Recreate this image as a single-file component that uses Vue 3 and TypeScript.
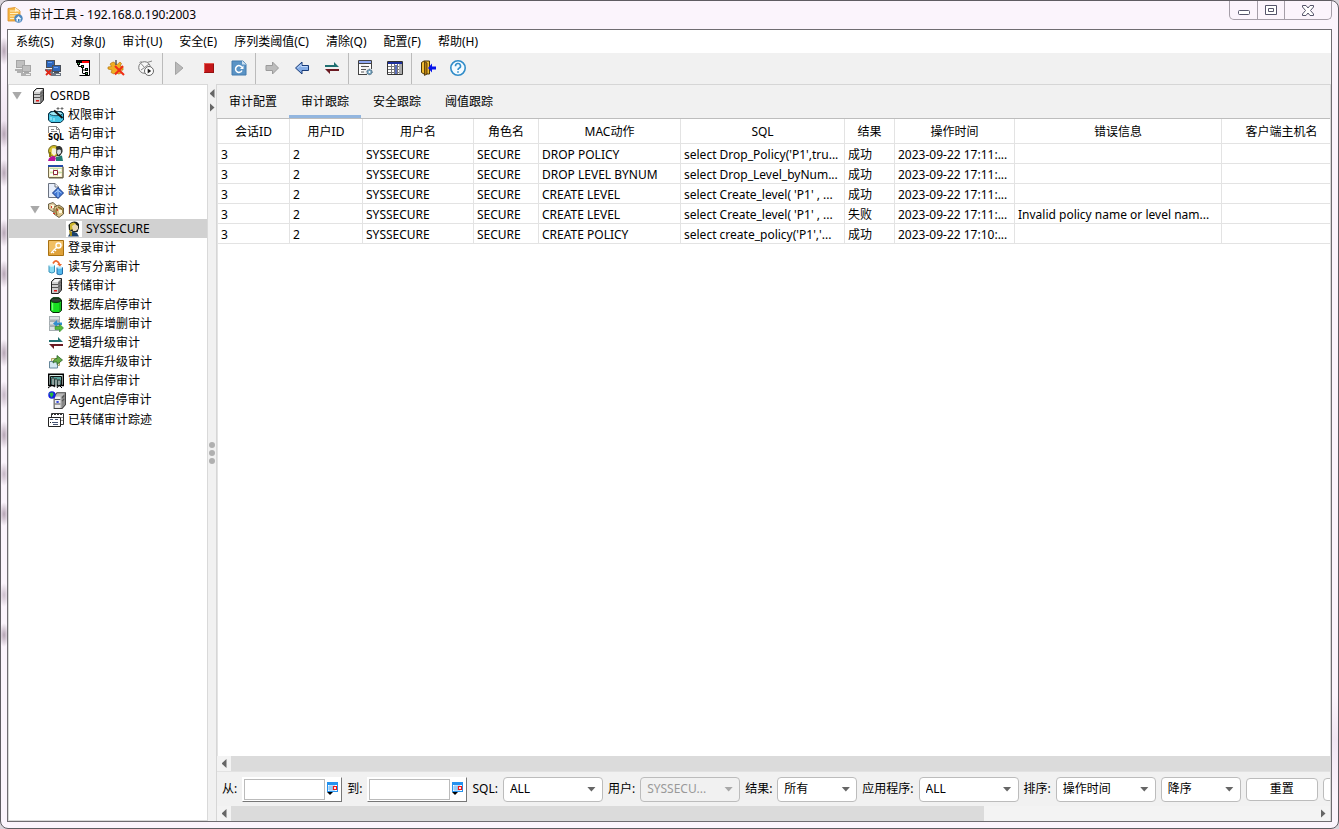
<script setup lang="ts">
import { ref } from 'vue'

interface TreeNode {
  label: string
  icon: string
  level: 0 | 1 | 2
  open?: boolean
}

interface AuditRow {
  session: string
  userId: string
  user: string
  role: string
  action: string
  sql: string
  result: string
  time: string
  error: string
  host: string
}

const server =
  '<path d="M3.500 3.500L6.500 .5H13.500V12L10.500 15.500H3.500Z" fill="#7c7c7c" stroke="#222"/><path d="M4 4h6v11H4z" fill="#cfcfcf"/><path d="M4 4L7 1H13L10 4z" fill="#f2f2f2"/><path d="M4 6.500h6M4 9.500h6M10 6.500l3-3M10 9.500l3-3" stroke="#555" fill="none"/><path d="M6 12h3v1.500H6z" fill="#e01818"/>'
const swap =
  '<path d="M1 7H15L10 2V5H1Z" fill="#1f6f70"/><path d="M15 9H1L6 14V11H15Z" fill="#6b1a22"/>'
const computers = (a: string, b: string, c: string): string =>
  `<path d="M1 0h9v8H1z" fill="${a}"/><path d="M2 1h7v6H2z" fill="${b}"/><path d="M0 9h10v2H0zM2 11h6v2H2z" fill="${c}"/><path d="M7 5h9v7H7z" fill="${a}"/><path d="M8 6h7v5H8z" fill="${b}"/><path d="M6 13h10v3H6z" fill="${c}"/><path d="M9 12h5v1H9z" fill="${a}"/><path d="M11 14h4v1h-4z" fill="#eee"/>`

const icons: Record<string, string> = {
  app:
    '<path d="M1 1.500L8 0.500L13 4V14H1Z" fill="#f5b748" stroke="#dc8c22" stroke-width="0.800"/><path d="M3 4h6M3 6.500h8M3 9h6M3 11.500h5" stroke="#fff0c4"/><path d="M8 .5V4.500H13Z" fill="#fff1cf"/><circle cx="11.500" cy="11.500" r="4.200" fill="#4d86be"/><path d="M8.500 12L11.500 9L14.500 12H13.500V14.500H9.500V12Z" fill="#e9f5ff"/><path d="M11 12h1.500v2.500H11z" fill="#397ab9"/>',
  connectOff: computers('#a6a6a6', '#c0c0c0', '#b0b0b0'),
  disconnect:
    computers('#4a4f58', '#2c66bd', '#6f7884') +
    '<path d="M3 2h4v1H3zM9 7h4v1H9z" fill="#6ba3f2"/><path d="M1 10l5 5M6 10l-5 5" stroke="#e02716" stroke-width="1.800"/>',
  tree:
    '<path d="M2.500 1.500H14.500V15.500H4.500" fill="#fff" stroke="#000"/><path d="M1 0h14v3H1z" fill="#000"/><path d="M7 1h7v2H7z" fill="#f00"/><path d="M3.500 2V6.500H8M7.500 6.500V13.500M8 10H11M8 13.500H11" stroke="#000" fill="none"/><path d="M2 2h3v3H2zM6 5h3v3H6zM10 8h3v3h-3zM10 12h3v3h-3z" fill="#000"/><path d="M3 3h1v1H3zM7 6h1v1H7zM11 9h1v1h-1zM11 13h1v1h-1z" fill="#4cd65c"/>',
  gearOff:
    '<path d="M6 2l1.500 2.200h2L12 2l1.500 1.500L12.200 6l2.800 1v3l-3 .5.5 3-2.500.5-2-2-2 2L3 12.500 4 10 0 9V7L3.500 6.500 2 4 4 2.500Z" fill="#f0ad21" stroke="#b87a13" stroke-width=".7"/><path d="M8 0V5" stroke="#555" stroke-width="1.500"/><path d="M7 6l9 9M15 6L7 14.500" stroke="#f02d16" stroke-width="2"/>',
  clock:
    '<circle cx="6.500" cy="7.500" r="5.800" fill="#f8f8f8" stroke="#777"/><path d="M3 3.500L6.500 7.500L11 4M6.500 7.500L3 10M9 2.500l5-1.500M1.500 3L3.500 1" stroke="#888" fill="none"/><circle cx="11" cy="11" r="4.500" fill="#fff" stroke="#666"/><path d="M9.700 8.500L13.200 11L9.700 13.500Z" fill="#222"/>',
  play: '<path d="M4.500 2L12 8L4.500 14.500Z" fill="#b9b9b9" stroke="#a4a4a4"/>',
  stop: '<path d="M3 3h10v10H3z" fill="#c4171a"/><path d="M3 3h10v1H3zM3 3h1v9H3z" fill="#e35a50"/><path d="M4 12h9v1H4zM12 4h1v9h-1z" fill="#941212"/>',
  refresh:
    '<path d="M1 1H12L15 4V15H1Z" fill="#5a93c5" stroke="#437bad"/><path d="M11 .5V4.500H15.500Z" fill="#cde1f1"/><path d="M11 10.500A3.400 3.400 0 1 1 11 7.500" fill="none" stroke="#fff" stroke-width="1.500"/><path d="M12.500 5.500V9H9Z" fill="#fff"/>',
  forward: '<path d="M2 5.500H8.500V2L14.500 8L8.500 14V10.500H2Z" fill="#bcbcbc" stroke="#9b9b9b"/>',
  back: '<path d="M14.500 5.500H8V2L1.500 8L8 14V10.500H14.500Z" fill="#86aee7" stroke="#173a78"/><path d="M3.500 8L7 4.500V6.500H13.500" fill="none" stroke="#c2dafb"/>',
  swap,
  form:
    '<path d="M1.500 .5H14.500V9M1.500 .5V14.500H8" fill="#fff" stroke="#444"/><path d="M2 1h12v2H2z" fill="#8fa8f2"/><path d="M1 3.500h14" stroke="#444"/><path d="M4 6.500H12M4 9.500H9M4 12H7" stroke="#555"/><path d="M1 14.500H10" stroke="#444"/><circle cx="12.500" cy="12" r="2.700" fill="#6f9db8" stroke="#3b566c" stroke-dasharray="1 1"/><circle cx="12.500" cy="12" r="1" fill="#fff"/>',
  grid:
    '<path d="M.5 1.500H15.500V14.500H.5Z" fill="#fff" stroke="#333"/><path d="M1 2h14v2H1z" fill="#1c2f9b"/><path d="M1 6.500H12M1 9.500H12M1 12.500H12M4.500 4V14M7.500 4V14M10.500 4V14" stroke="#777"/><path d="M8 5h2v9H8z" fill="#5c6fbd"/><path d="M12 4h3v10h-3z" fill="#aaa"/>',
  exit:
    '<path d="M1.500 2.500L4 1H9.500V14H4L1.500 12.500Z" fill="#f2bd32" stroke="#4b3709"/><path d="M4.500 1.500V15.500L7 14V3Z" fill="#b47b13" stroke="#332400" stroke-width=".7"/><path d="M8 8L12 3.500V6.500H16V9.500H12V12.500Z" fill="#0614eb"/>',
  help:
    '<circle cx="8" cy="8" r="7.200" fill="#f4fbff" stroke="#318dc9" stroke-width="1.600"/><path d="M5.500 6.200A2.500 2.500 0 1 1 9 8.300C8 8.800 8 9 8 10" fill="none" stroke="#318dc9" stroke-width="1.600"/><path d="M7.200 11.200h1.600v1.600H7.200z" fill="#318dc9"/>',
  server,
  permission:
    '<path d="M.5 6.500L3 4.500H13.500L15.500 6.500V13L12.500 15.500H3L.5 13Z" fill="#46c7e6" stroke="#073045"/><ellipse cx="8" cy="6.500" rx="6.500" ry="2.200" fill="#a0ecf8" stroke="#073045" stroke-width=".8"/><path d="M3 10v3M6 11v3" stroke="#baf6ff"/><path d="M6 3.500L14.500 11" stroke="#111" stroke-width="2"/><path d="M10 0v3M8.500 1.500h3M14 0v3M12.500 1.500h3" stroke="#555" stroke-width=".8"/>',
  sql:
    '<path d="M.5 7V.5H8.500L11.500 3.500V7" fill="#fff" stroke="#888"/><path d="M8.500 .5V3.500H11.500M3 3.500H6M3 5.500H9" fill="none" stroke="#888"/><text x="0" y="14" font-family="Liberation Sans Narrow, DejaVu Sans Condensed, sans-serif" font-weight="700" font-size="8" fill="#000">SQL</text>',
  users:
    '<circle cx="6" cy="6" r="5.500" fill="#d4bf2a" stroke="#554b06" stroke-width=".8"/><path d="M8 2C12-.5 15 2 14.500 7L12 11H9Z" fill="#333"/><path d="M4 3.500Q9 2 9 8L6 11L3.500 8Z" fill="#f6f2dd"/><path d="M9 4.500Q14 2.500 13.500 8L10.500 10.500L8.500 8Z" fill="#d6dde0" stroke="#111" stroke-width=".7"/><path d="M0 16Q1 11 6 11L8 13L7 16Z" fill="#b4159b"/><path d="M8 16V12L14 10.500L15 16Z" fill="#237c74"/><path d="M2 7v5" stroke="#8d7c0c" stroke-width="2"/>',
  object:
    '<path d="M.5 2.500H15V13.500H.5Z" fill="#f8efca" stroke="#746b4c"/><path d="M0 1h15v2H0z" fill="#234aa7"/><path d="M2 5h3v2H2zM10 5h3v2h-3zM2 10h3v2H2zM10 10h3v2h-3z" fill="#fff"/><path d="M2 4.500H14M2 8.500H14M5.500 4V12M9.500 4V12" stroke="#bda" fill="none"/><path d="M5.500 6.500H9.500V10.500H5.500Z" fill="#fff" stroke="#8d213a"/><path d="M1 14h14V3" fill="none" stroke="#6d644a"/>',
  missing:
    '<path d="M.5 .5H7L10.500 4V14.500H.5Z" fill="#e7eefb" stroke="#6a7280"/><path d="M7 .5V4H10.500" fill="#fff" stroke="#6a7280"/><path d="M10 4.500L15.500 10L10 15.500L4.500 10Z" fill="#3d75d4" stroke="#193a86"/><path d="M10 6V14M6.500 10L10 7.500L13.500 10" fill="none" stroke="#a9cdf9"/>',
  mac:
    '<path d="M.5 2L5 .5L9 4V9L5.500 10L.5 7Z" fill="#dfcda5" stroke="#4e4325" stroke-width=".8"/><path d="M6 5L11 3L15.500 6V12L11 15.500L6 12Z" fill="#ddc48c" stroke="#4e4325" stroke-width=".8"/><path d="M9 6Q7 9 9 13M10 5L14 7V11" fill="none" stroke="#8b7131" stroke-width="1.500"/><path d="M3 3h3v3H3zM11 8h3v3h-3z" fill="#fff8da"/><path d="M3 4h1v2H3zM9 7h1v2H9zM5 11h2v1H5z" fill="#df3326"/>',
  secure:
    '<path d="M0 0h16v16H0z" fill="#fff"/><path d="M5 1.500Q10-1 13 3V7L11.500 11H7L3 9L2.500 4Z" fill="#1d221c"/><path d="M4 3Q8 0 10 3L8 8L4 9Z" fill="#cfb62a"/><path d="M6 5L9 3L12 5V8L10 10H7Z" fill="#ead9b5"/><path d="M2 15.500L4 12L7 10.500L11 12L13 15.500Z" fill="#1c416b"/><path d="M3 9L6 11V15H4Z" fill="#a18b17"/>',
  key:
    '<path d="M.5 .5H15.500V15.500H.5Z" fill="#dfa23a" stroke="#a87112"/><path d="M1 1h14v5L1 12z" fill="#f1bf63"/><circle cx="10.500" cy="5.500" r="2.500" fill="none" stroke="#fff" stroke-width="1.400"/><path d="M8.500 7.500L3 13M4.500 11.500L6 13M6.500 9.500L8 11" stroke="#fff" stroke-width="1.400"/>',
  split:
    '<path d="M1 6.500H6.500V13Q4 15 1 13Z" fill="#8bdcf4" stroke="#3893bb"/><path d="M9 8.500H14.500V15Q12 16.500 9 15Z" fill="#53b9ed" stroke="#246fa8"/><ellipse cx="3.700" cy="6.500" rx="2.700" ry="1.300" fill="#def8ff"/><ellipse cx="11.700" cy="8.500" rx="2.700" ry="1.300" fill="#bceaff"/><path d="M5 4.500Q8-1 11.500 5" fill="none" stroke="#ed692e" stroke-width="1.800"/><path d="M9 5H14L12 7.500Z" fill="#ed692e"/>',
  database:
    '<path d="M2.500 3L5 .8H11L13.500 3V13.500L11 15.500H5L2.500 13.500Z" fill="#17df20" stroke="#062b08"/><ellipse cx="8" cy="3.200" rx="5" ry="2.200" fill="#344239" stroke="#062b08"/><path d="M4.500 6V13.500" stroke="#71ff73" stroke-width="1.400"/><path d="M12 6V14" stroke="#0b9514"/>',
  addDelete:
    '<path d="M1 0h11v15H1z" fill="#b7bdc2"/><path d="M1.500 .5H11.500V4H1.500ZM1.500 5.500H11.500V9H1.500ZM1.500 10.500H11.500V14.500H1.500Z" fill="#dce1e3" stroke="#959da2" stroke-width=".7"/><path d="M5 7.500L9 4V6.500H14V9H9V11Z" fill="#318dce"/><path d="M15.500 12L11.500 8V10.500H7V13.500H11.500V16Z" fill="#55ba39" stroke="#25781d" stroke-width=".5"/>',
  upgrade:
    '<path d="M3.500 4.500H11.500V11.500H3.500Z" fill="#f0eac6" stroke="#b0a668"/><path d="M1.500 7.500H9.500V14H1.500Z" fill="#d4e8f2" stroke="#65869a"/><path d="M5 9Q5.500 4.500 9 4.500V1.500L14.500 6L9 10.500V8Q6.500 7.500 5 9Z" fill="#65ac43" stroke="#28622a" stroke-width=".8"/>',
  auditSwitch:
    '<path d="M.7 1.200H15.300V12.500H.7Z" fill="#dceee9" stroke="#000" stroke-width="1.400"/><path d="M2.500 3.500H13.500V12H2.500Z" fill="#58a39c" stroke="#111"/><path d="M4 12V5H6V12M7 13V6H9V13M10 14V7H12V14" fill="#e6fff9" stroke="#111" stroke-width=".8"/><path d="M0 15L4 12L7 14M9 15L11 12L14 15" fill="none" stroke="#000"/>',
  agent:
    '<path d="M5.500 4.500L8 1.500H15.500V12L12.500 15.500H5.500Z" fill="#b8b8b8" stroke="#444"/><path d="M6 5h5v10H6z" fill="#eee"/><path d="M12 5v10l3-3V2z" fill="#888"/><path d="M6 7.500h5M6 11.500h5M12.500 6l2-2M12.500 9l2-2" stroke="#555"/><circle cx="3.500" cy="3.500" r="3.300" fill="#1720e4"/><path d="M1 2l3-1 1 2-2 3z" fill="#25b940"/><path d="M7.500 9h2v1.500h-2z" fill="#1930dc"/>',
  archive:
    '<path d="M3.500 1.500H15.500V12.500H3.500Z" fill="#fff" stroke="#333"/><path d="M3 2.500h12" stroke="#333" stroke-dasharray="2 1"/><path d="M.5 5.500H12.500V14.500H.5Z" fill="#fff" stroke="#222"/><path d="M2 7.500H5M7 7.500H10M4 10.500H10M5 12.500H10" stroke="#455372"/><path d="M2 10h1v1H2zM13.500 5h1v1h-1zM13.500 8h1v1h-1z" fill="#222"/>',
  calendar:
    '<path d="M0 0h11v10H0z" fill="#2491ee"/><path d="M1 3h9v6H1z" fill="#fff"/><path d="M1 5h9M1 7h9M3 3v6M5 3v6M7 3v6" stroke="#5badf2" stroke-width=".8"/><path d="M6.500 4.500h3v3h-3z" fill="#fff" stroke="#f01616" stroke-width="1.200"/><path d="M0 10h6L3 13z" fill="#000"/>',
}

const menus: string[] = ['系统(S)', '对象(J)', '审计(U)', '安全(E)', '序列类阈值(C)', '清除(Q)', '配置(F)', '帮助(H)']

const toolGroups: { icon: string; title: string }[][] = [
  [{ icon: 'connectOff', title: '连接' }, { icon: 'disconnect', title: '断开' }, { icon: 'tree', title: '对象树' }],
  [{ icon: 'gearOff', title: '停用' }, { icon: 'clock', title: '定时' }],
  [{ icon: 'play', title: '开始' }, { icon: 'stop', title: '停止' }, { icon: 'refresh', title: '刷新' }],
  [{ icon: 'forward', title: '前进' }, { icon: 'back', title: '后退' }, { icon: 'swap', title: '切换' }],
  [{ icon: 'form', title: '属性' }, { icon: 'grid', title: '表格' }],
  [{ icon: 'exit', title: '退出' }, { icon: 'help', title: '帮助' }],
]

const tree: TreeNode[] = [
  { label: 'OSRDB', icon: 'server', level: 0, open: true },
  { label: '权限审计', icon: 'permission', level: 1 },
  { label: '语句审计', icon: 'sql', level: 1 },
  { label: '用户审计', icon: 'users', level: 1 },
  { label: '对象审计', icon: 'object', level: 1 },
  { label: '缺省审计', icon: 'missing', level: 1 },
  { label: 'MAC审计', icon: 'mac', level: 1, open: true },
  { label: 'SYSSECURE', icon: 'secure', level: 2 },
  { label: '登录审计', icon: 'key', level: 1 },
  { label: '读写分离审计', icon: 'split', level: 1 },
  { label: '转储审计', icon: 'server', level: 1 },
  { label: '数据库启停审计', icon: 'database', level: 1 },
  { label: '数据库增删审计', icon: 'addDelete', level: 1 },
  { label: '逻辑升级审计', icon: 'swap', level: 1 },
  { label: '数据库升级审计', icon: 'upgrade', level: 1 },
  { label: '审计启停审计', icon: 'auditSwitch', level: 1 },
  { label: 'Agent启停审计', icon: 'agent', level: 1 },
  { label: '已转储审计踪迹', icon: 'archive', level: 1 },
]
const selectedNode = ref('SYSSECURE')

const tabs: string[] = ['审计配置', '审计跟踪', '安全跟踪', '阈值跟踪']
const activeTab = ref('审计跟踪')

const columns: { key: keyof AuditRow; title: string }[] = [
  { key: 'session', title: '会话ID' },
  { key: 'userId', title: '用户ID' },
  { key: 'user', title: '用户名' },
  { key: 'role', title: '角色名' },
  { key: 'action', title: 'MAC动作' },
  { key: 'sql', title: 'SQL' },
  { key: 'result', title: '结果' },
  { key: 'time', title: '操作时间' },
  { key: 'error', title: '错误信息' },
  { key: 'host', title: '客户端主机名' },
]

const record = (action: string, sql: string, result: string, time: string, error = ''): AuditRow => ({
  session: '3', userId: '2', user: 'SYSSECURE', role: 'SECURE', action, sql, result, time, error, host: '',
})
const rows: AuditRow[] = [
  record('DROP POLICY', "select Drop_Policy('P1',tru...", '成功', '2023-09-22 17:11:...'),
  record('DROP LEVEL BYNUM', 'select Drop_Level_byNum...', '成功', '2023-09-22 17:11:...'),
  record('CREATE LEVEL', "select Create_level( 'P1' , ...", '成功', '2023-09-22 17:11:...'),
  record('CREATE LEVEL', "select Create_level( 'P1' , ...", '失败', '2023-09-22 17:11:...', 'Invalid policy name or level nam...'),
  record('CREATE POLICY', "select create_policy('P1','...", '成功', '2023-09-22 17:10:...'),
]

const dates: { id: string; label: string }[] = [
  { id: 'date-from', label: '从:' },
  { id: 'date-to', label: '到:' },
]
const filters: { id: string; label: string; value: string; size: string; disabled?: boolean }[] = [
  { id: 'sql', label: 'SQL:', value: 'ALL', size: 'wide' },
  { id: 'user', label: '用户:', value: 'SYSSECU...', size: 'wide', disabled: true },
  { id: 'result', label: '结果:', value: '所有', size: 'narrow' },
  { id: 'program', label: '应用程序:', value: 'ALL', size: 'wide' },
  { id: 'sort', label: '排序:', value: '操作时间', size: 'wide' },
  { id: 'order', label: '', value: '降序', size: 'narrow' },
]
</script>

<template>
  <div class="window">
    <header class="titlebar">
      <svg class="icon" viewBox="0 0 16 16" v-html="icons.app" />
      <h1>审计工具 - 192.168.0.190:2003</h1>
      <div class="caption">
        <button type="button" aria-label="最小化">
          <svg width="14" height="12" viewBox="0 0 14 12"><rect x="1.500" y="6.500" width="11" height="4" rx="1" fill="#fff" stroke="#55546a" /></svg>
        </button>
        <button type="button" aria-label="最大化">
          <svg width="12" height="10" viewBox="0 0 12 10"><path d="M.5 .5H11.500V9.500H.5Z" fill="#fff" stroke="#55546a" /><path d="M3.500 3.500H8.500V6.500H3.500Z" fill="#fff" stroke="#55546a" /></svg>
        </button>
        <button type="button" class="close" aria-label="关闭">
          <svg width="12" height="11" viewBox="0 0 12 11"><path d="M.5 .5H4L6 3L8 .5H11.500V2L8.500 5.500L11.500 9V10.500H8L6 8L4 10.500H.5V9L3.500 5.500L.5 2Z" fill="#fff" stroke="#55546a" /></svg>
        </button>
      </div>
    </header>

    <div class="client">
      <nav class="menubar">
        <button v-for="m in menus" :key="m" type="button">{{ m }}</button>
      </nav>

      <div class="toolbar" role="toolbar">
        <div v-for="(group, i) in toolGroups" :key="i" class="tool-group">
          <button v-for="t in group" :key="t.icon" type="button" :aria-label="t.title">
            <svg class="icon" viewBox="0 0 16 16" v-html="icons[t.icon]" />
          </button>
        </div>
      </div>

      <main class="workspace">
        <ul class="tree">
          <li v-for="n in tree" :key="n.label">
            <button
              type="button"
              :class="['node', `level-${n.level}`, { selected: n.label === selectedNode, agent: n.icon === 'agent' }]"
              @click="selectedNode = n.label"
            >
              <span :class="['twisty', { open: n.open }]" />
              <svg class="icon" viewBox="0 0 16 16" v-html="icons[n.icon]" />
              <span>{{ n.label }}</span>
            </button>
          </li>
        </ul>

        <div class="splitter">
          <div class="collapse">
            <span class="tri left" />
            <span class="tri right" />
          </div>
          <div class="grip"><i /><i /><i /></div>
        </div>

        <section class="panel">
          <div class="tabs" role="tablist">
            <button
              v-for="t in tabs"
              :key="t"
              type="button"
              role="tab"
              :aria-selected="t === activeTab"
              :class="{ active: t === activeTab }"
              @click="activeTab = t"
            >{{ t }}</button>
          </div>

          <div class="grid-view">
            <table>
              <colgroup>
                <col v-for="c in columns" :key="c.key" :class="`col-${c.key}`" />
              </colgroup>
              <thead>
                <tr><th v-for="c in columns" :key="c.key">{{ c.title }}</th></tr>
              </thead>
              <tbody>
                <tr v-for="(r, i) in rows" :key="i">
                  <td v-for="c in columns" :key="c.key">{{ r[c.key] }}</td>
                </tr>
              </tbody>
            </table>
          </div>

          <div class="scrollbar">
            <span class="end"><span class="tri left" /></span>
            <span class="thumb full" />
          </div>

          <form class="filters" @submit.prevent>
            <template v-for="d in dates" :key="d.id">
              <label :for="d.id">{{ d.label }}</label>
              <div class="date">
                <input :id="d.id" type="text" />
                <button type="button" aria-label="选择日期">
                  <svg width="12" height="14" viewBox="0 0 12 14" v-html="icons.calendar" />
                </button>
              </div>
            </template>
            <template v-for="f in filters" :key="f.id">
              <label v-if="f.label" :for="f.id">{{ f.label }}</label>
              <div :class="['combo', f.size, { disabled: f.disabled }]">
                <select :id="f.id" :disabled="f.disabled" :aria-label="f.label ? undefined : '顺序'">
                  <option>{{ f.value }}</option>
                </select>
              </div>
            </template>
            <button type="button" class="push">重置</button>
            <button type="button" class="push" aria-label="查询" />
          </form>

          <div class="scrollbar">
            <span class="end"><span class="tri left" /></span>
            <span class="thumb" />
            <span class="rest" />
            <span class="end"><span class="tri right" /></span>
          </div>
        </section>
      </main>
    </div>
  </div>
</template>

<style>
body {
  background: #d9d3da;
}
</style>

<style scoped>
.window,
.window * {
  box-sizing: border-box;
}

.window {
  display: flex;
  flex-direction: column;
  height: 100vh;
  padding: 0 6px 6px;
  border: 1px solid #5f5c62;
  border-radius: 8px;
  overflow: hidden;
  color: #000;
  font: 12px/16px "Noto Sans", "Noto Sans CJK SC", sans-serif;
  background:
    radial-gradient(5px 14px at 3px 50px, #b5a4b4, transparent),
    radial-gradient(5px 14px at 3px 133px, #b5a4b4, transparent),
    radial-gradient(5px 14px at 3px 172px, #b5a4b4, transparent),
    radial-gradient(5px 14px at 3px 232px, #b5a4b4, transparent),
    radial-gradient(5px 14px at 3px 273px, #b5a4b4, transparent),
    radial-gradient(5px 14px at 3px 352px, #b5a4b4, transparent),
    radial-gradient(5px 14px at 3px 394px, #c5b6c5, transparent),
    radial-gradient(5px 14px at 3px 434px, #b5a4b4, transparent),
    radial-gradient(5px 12px at 3px 473px, #c5b6c5, transparent),
    radial-gradient(5px 12px at 3px 513px, #b5a4b4, transparent),
    radial-gradient(5px 12px at 3px 594px, #cdbfcd, transparent),
    radial-gradient(5px 12px at 3px 634px, #b5a4b4, transparent),
    linear-gradient(205deg, transparent 48%, #f1e6f2 51%, transparent 55%),
    #fbf4fc;
}

button,
input,
select {
  margin: 0;
  padding: 0;
  border: 0;
  color: inherit;
  font: inherit;
  background: none;
}

.icon {
  flex: none;
  width: 16px;
  height: 16px;
  overflow: visible;
}

.titlebar {
  flex: none;
  display: flex;
  align-items: center;
  height: 28px;
  gap: 6px;
}

.titlebar h1 {
  flex: 1;
  margin: 0;
  font-size: 12px;
  font-weight: 400;
}

.caption {
  display: flex;
  align-self: flex-start;
  height: 19px;
  border: 1px solid #a59ea8;
  border-top: 0;
  border-radius: 0 0 5px 5px;
}

.caption button {
  display: grid;
  place-items: center;
  width: 27px;
}

.caption button + button {
  border-left: 1px solid #a59ea8;
}

.caption .close {
  width: 47px;
}

.client {
  flex: 1;
  display: flex;
  flex-direction: column;
  min-height: 0;
  border: 1px solid #6f6c71;
  background: #f1f1f1;
}

.menubar {
  flex: none;
  display: flex;
  gap: 17px;
  height: 23px;
  padding: 1px 0 0 8px;
  background: #fff;
}

.toolbar {
  flex: none;
  display: flex;
  height: 31px;
}

.tool-group {
  display: flex;
}

.tool-group + .tool-group {
  margin-left: 1px;
  padding-left: 1px;
  border-left: 1px solid #bbb;
}

.tool-group button {
  display: grid;
  place-items: center;
  width: 30px;
  padding-bottom: 1px;
}

.workspace {
  flex: 1;
  display: flex;
  min-height: 0;
}

.tree {
  flex: none;
  width: 200px;
  margin: 0;
  padding: 1px 0 0;
  list-style: none;
  border: 1px solid #d9d9d9;
  background: #fff;
}

.node {
  display: flex;
  align-items: center;
  width: 100%;
  height: 19px;
  gap: 4px;
  text-align: left;
}

.node.agent {
  height: 20px;
}

.node.agent .icon {
  width: 18px;
  height: 18px;
}

.node.selected {
  background: #d1d1d1;
}

.level-0 {
  padding-left: 3px;
}

.level-1 {
  padding-left: 21px;
}

.level-2 {
  padding-left: 39px;
}

.twisty {
  width: 10px;
  height: 8px;
  margin-right: 4px;
}

.twisty.open {
  background: #a9a9a9;
  clip-path: polygon(0 0, 100% 0, 50% 100%);
}

.splitter {
  flex: none;
  display: flex;
  flex-direction: column;
  justify-content: space-between;
  width: 8px;
}

.splitter::after {
  content: "";
  height: 27px;
}

.collapse {
  display: grid;
  justify-items: center;
  gap: 5px;
  padding-top: 5px;
}

.tri {
  display: block;
  width: 5px;
  height: 9px;
  background: #666;
}

.tri.left {
  clip-path: polygon(100% 0, 100% 100%, 0 50%);
}

.tri.right {
  clip-path: polygon(0 0, 0 100%, 100% 50%);
}

.grip {
  display: grid;
  justify-items: center;
  gap: 2px;
}

.grip i {
  width: 6px;
  height: 6px;
  border-radius: 50%;
  background: #b0b0b0;
}

.panel {
  flex: 1;
  display: flex;
  flex-direction: column;
  min-width: 0;
  border: 1px solid #d6d6d6;
  border-bottom: 0;
}

.tabs {
  flex: none;
  display: flex;
  height: 34px;
  border-bottom: 1px solid #bdbdbd;
}

.tabs button {
  padding: 0 12px;
  border-bottom: 3px solid transparent;
  border-top: 4px solid transparent;
}

.tabs .active {
  border-bottom-color: #93b6df;
}

.grid-view {
  flex: 1;
  min-height: 0;
  overflow: hidden;
  border-left: 1px solid #e3e3e3;
  background: #fff;
}

table {
  width: 1124px;
  table-layout: fixed;
  border-collapse: separate;
  border-spacing: 0;
}

th,
td {
  padding: 2px 0 0 3px;
  overflow: hidden;
  white-space: nowrap;
  border-right: 1px solid #e3e3e3;
  border-bottom: 1px solid #e3e3e3;
}

th {
  height: 25px;
  padding: 2px 0 0;
  font-weight: 400;
  text-align: center;
}

td {
  height: 20px;
}

.col-session {
  width: 72px;
}

.col-userId {
  width: 73px;
}

.col-user {
  width: 111px;
}

.col-role {
  width: 65px;
}

.col-action {
  width: 142px;
}

.col-sql {
  width: 164px;
}

.col-result {
  width: 50px;
}

.col-time,
.col-host {
  width: 120px;
}

.col-error {
  width: 207px;
}

.scrollbar {
  flex: none;
  display: flex;
  height: 15px;
  background: #f3f3f3;
}

.scrollbar .end {
  display: grid;
  place-items: center;
  width: 14px;
}

.scrollbar .thumb {
  flex: 25;
  background: #dbdbdb;
}

.scrollbar .rest {
  flex: 11;
}

.filters {
  flex: none;
  display: flex;
  align-items: center;
  gap: 5px;
  height: 35px;
  padding-left: 5px;
  overflow: hidden;
  border-top: 1px solid #e2e2e2;
}

.filters > * {
  flex: none;
}

.filters label {
  white-space: nowrap;
}

.date {
  display: flex;
  width: 100px;
  height: 25px;
  padding: 1px;
  border: 1px solid;
  border-color: #fff #777 #777 #fff;
  background: #fff;
}

.date input {
  flex: 1;
  min-width: 0;
  border: 1px solid #bbb;
}

.date button {
  display: grid;
  place-items: center;
  width: 15px;
}

.combo {
  position: relative;
  height: 25px;
}

.combo::after {
  content: "";
  position: absolute;
  top: 10px;
  right: 7px;
  width: 9px;
  height: 5px;
  background: #666;
  clip-path: polygon(0 0, 100% 0, 50% 100%);
  pointer-events: none;
}

.combo select {
  appearance: none;
  width: 100%;
  height: 100%;
  padding: 0 20px 0 6px;
  border: 1px solid #bcbcbc;
  border-radius: 4px;
  background: #fff;
}

.combo.wide {
  width: 100px;
}

.combo.narrow {
  width: 80px;
}

.combo.disabled::after {
  background: #a8a8a8;
}

.combo.disabled select {
  color: #999;
  opacity: 1;
  background: #f1f1f1;
}

.push {
  width: 72px;
  height: 23px;
  border: 1px solid #bcbcbc;
  border-radius: 4px;
  background: #fff;
}
</style>
